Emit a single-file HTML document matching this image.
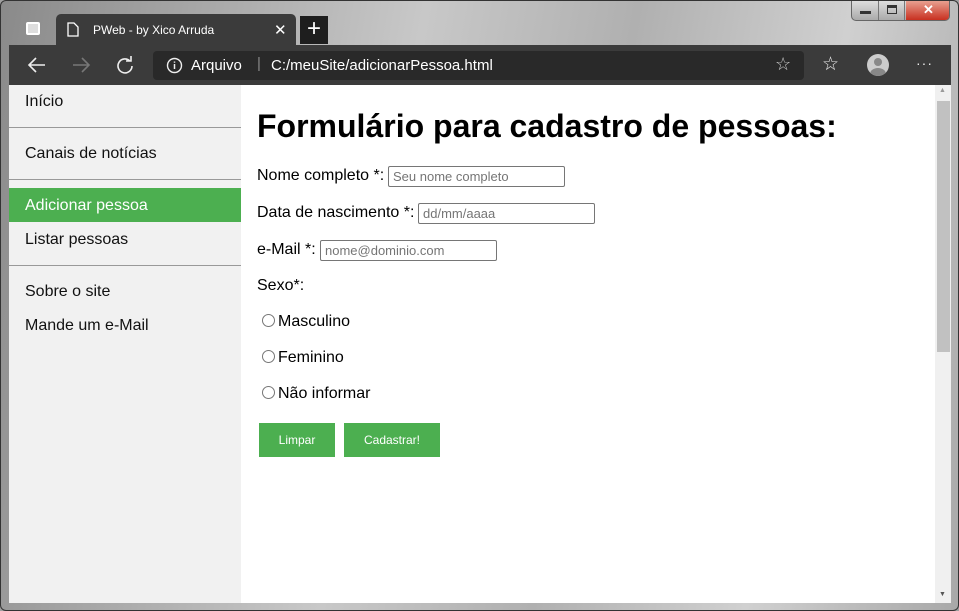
<!DOCTYPE html><html><head><meta charset="utf-8"><style>
*{margin:0;padding:0;box-sizing:border-box}
body{width:959px;height:611px;overflow:hidden;background:#a0a0a0;font-family:"Liberation Sans",Arial,sans-serif;position:relative}
.frame{position:absolute;left:0;top:0;width:959px;height:611px;border:1px solid #333;border-radius:6px;background:linear-gradient(100deg,#8a8a8a 0%,#c8c8c8 40%,#b0b0b0 60%,#d0d0d0 80%,#a8a8a8 100%)}
.ab{position:absolute}
.tab{left:56px;top:14px;width:240px;height:32px;background:#3b3b3b;border-radius:5px 5px 0 0;color:#fff;font-size:12px}
.toolbar{left:9px;top:45px;width:942px;height:40px;background:#3b3b3b}
.url{left:153px;top:51px;width:651px;height:29px;background:#292929;border-radius:4px;color:#fff;font-size:15px}
.side{left:9px;top:85px;width:232px;height:518px;background:#f1f1f1;font-size:16px;color:#111}
.side div{position:absolute;left:16px}
.side hr{position:absolute;left:0;width:232px;border:0;border-top:1px solid #999}
.main{left:241px;top:85px;width:694px;height:518px;background:#fff;color:#000;font-size:16px}
.main .l{position:absolute;left:16px}
input{position:absolute;height:21px;border:1px solid #767676;border-radius:2px;font-family:"Liberation Sans",Arial,sans-serif;font-size:13px;padding-left:4px;color:#777;background:#fff}
.rad{position:absolute;left:21px;width:13px;height:13px;border:1px solid #777;border-radius:50%}
.btn{position:absolute;background:#4caf50;color:#fff;font-size:12px;text-align:center;line-height:34px;height:34px}
.sb{left:935px;top:85px;width:16px;height:518px;background:#f0f0f0}
</style></head><body>
<div class="frame"></div>
<div class="ab" style="left:851px;top:1px;width:99px;height:20px;border:1px solid #666;border-top:0;border-radius:0 0 5px 5px;background:linear-gradient(#ddd,#aaa);overflow:hidden">
<div class="ab" style="left:0;top:0;width:27px;height:19px;border-right:1px solid #777"><div class="ab" style="left:8px;top:10px;width:11px;height:3px;background:#333"></div></div>
<div class="ab" style="left:28px;top:0;width:25px;height:19px;border-right:1px solid #777"><div class="ab" style="left:7px;top:4px;width:10px;height:9px;border:1px solid #333;border-top-width:3px"></div></div>
<div class="ab" style="left:54px;top:0;width:45px;height:19px;background:linear-gradient(#e8a090,#c83020);color:#fff;font-weight:bold;text-align:center;font-size:13px;line-height:18px">✕</div></div>
<div class="ab" style="left:26px;top:22px;width:14px;height:13px;border:2px solid #fff;border-radius:2px;background:#ddd"></div>
<div class="ab tab"><svg class="ab" style="left:11px;top:8px" width="12" height="15"><path d="M1 1h6l4 4v9H1z" fill="none" stroke="#fff" stroke-width="1.3"/></svg><span class="ab" style="left:37px;top:9px">PWeb - by Xico Arruda</span><span class="ab" style="left:218px;top:7px;font-size:15px">✕</span></div>
<div class="ab" style="left:300px;top:16px;width:28px;height:28px;background:#1e1e1e;color:#fff;font-size:24px;text-align:center;line-height:26px">+</div>
<div class="ab toolbar"></div>
<svg class="ab" style="left:27px;top:56px" width="20" height="18"><path d="M18 9H3M9 2L2 9l7 7" fill="none" stroke="#eee" stroke-width="1.6"/></svg>
<svg class="ab" style="left:71px;top:56px" width="20" height="18"><path d="M2 9h15M11 2l7 7-7 7" fill="none" stroke="#777" stroke-width="1.6"/></svg>
<svg class="ab" style="left:115px;top:55px" width="20" height="20"><path d="M15 6A7 7 0 1 0 17 11M16 1v5h-5" fill="none" stroke="#eee" stroke-width="1.6"/></svg>
<div class="ab url"><svg class="ab" style="left:13px;top:6px" width="17" height="17"><circle cx="8.5" cy="8.5" r="7" fill="none" stroke="#eee" stroke-width="1.4"/><path d="M8.5 7v5M8.5 4.5v1.2" stroke="#eee" stroke-width="1.5"/></svg><span class="ab" style="left:38px;top:6px">Arquivo</span><span class="ab" style="left:104px;top:4px;color:#888">|</span><span class="ab" style="left:118px;top:6px">C:/meuSite/adicionarPessoa.html</span>
<span class="ab" style="left:622px;top:3px;color:#ccc;font-size:18px">☆</span></div>
<span class="ab" style="left:822px;top:53px;color:#eee;font-size:19px">☆</span>
<div class="ab" style="left:867px;top:54px;width:22px;height:22px;border-radius:50%;background:#ccc;overflow:hidden"><div class="ab" style="left:7px;top:4px;width:8px;height:8px;border-radius:50%;background:#888"></div><div class="ab" style="left:3px;top:14px;width:16px;height:12px;border-radius:50%;background:#888"></div></div>
<span class="ab" style="left:916px;top:55px;color:#eee;font-size:14px;letter-spacing:1px">···</span>
<div class="ab side">
<div style="top:8px">Início</div><hr style="top:42px">
<div style="top:60px">Canais de notícias</div><hr style="top:94px">
<div style="top:103px;left:0;width:232px;height:34px;background:#4caf50"></div>
<div style="top:112px;color:#fff">Adicionar pessoa</div>
<div style="top:146px">Listar pessoas</div><hr style="top:180px">
<div style="top:198px">Sobre o site</div>
<div style="top:232px">Mande um e-Mail</div></div>
<div class="ab main">
<div class="l" style="top:23px;font-size:32px;font-weight:bold">Formulário para cadastro de pessoas:</div>
<div class="l" style="top:82px">Nome completo *:</div><input style="left:147px;top:81px;width:177px" placeholder="Seu nome completo">
<div class="l" style="top:119px">Data de nascimento *:</div><input style="left:177px;top:118px;width:177px" placeholder="dd/mm/aaaa">
<div class="l" style="top:156px">e-Mail *:</div><input style="left:79px;top:155px;width:177px" placeholder="nome@dominio.com">
<div class="l" style="top:192px">Sexo*:</div>
<div class="rad" style="top:229px"></div><div class="l" style="left:37px;top:228px">Masculino</div>
<div class="rad" style="top:265px"></div><div class="l" style="left:37px;top:264px">Feminino</div>
<div class="rad" style="top:301px"></div><div class="l" style="left:37px;top:300px">Não informar</div>
<div class="btn" style="left:18px;top:338px;width:76px">Limpar</div>
<div class="btn" style="left:103px;top:338px;width:96px">Cadastrar!</div></div>
<div class="ab sb"><div class="ab" style="left:2px;top:16px;width:13px;height:251px;background:#c1c1c1"></div><span class="ab" style="left:4px;top:2px;font-size:7px;color:#999">▲</span><span class="ab" style="left:4px;top:506px;font-size:7px;color:#555">▼</span></div>
</body></html>
